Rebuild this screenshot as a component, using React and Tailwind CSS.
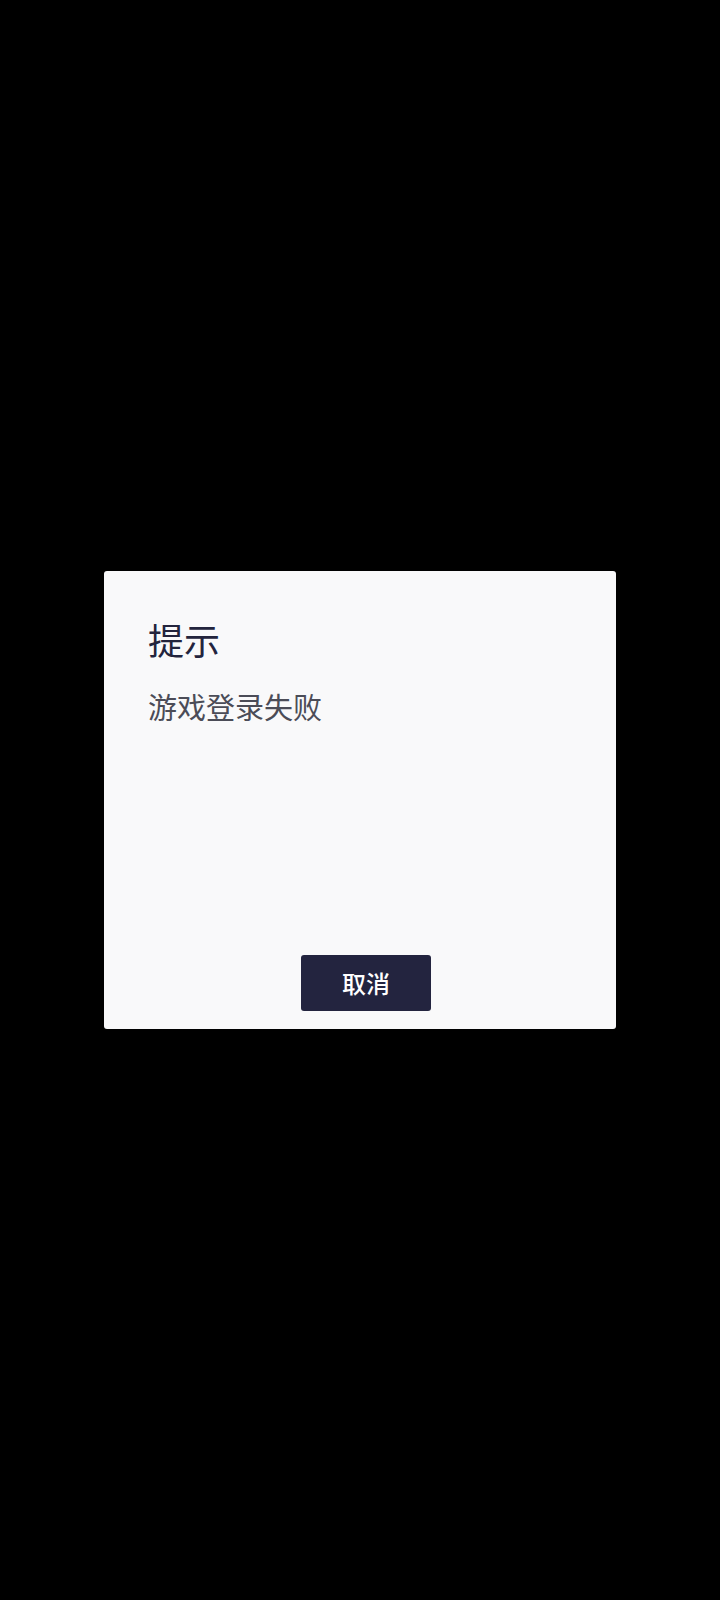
import React from 'react';

const font = { fontFamily: '"Noto Sans CJK SC", "Noto Sans", sans-serif' };

export default function App() {
  return (
    <div className="w-[720px] h-[1600px] bg-black flex items-center justify-center" style={font}>
      <div className="w-[512px] h-[458px] bg-[#f9f9fa] rounded-[3px] flex flex-col pl-[44px] pr-[44px]">
        <h1 className="mt-[46px] text-[36px] leading-[44px] text-[#23243d] font-normal">提示</h1>
        <p className="mt-[25px] text-[29px] leading-[40px] text-[#4b4c57]">游戏登录失败</p>
        <div className="mt-auto mb-[18px] flex justify-center pl-[12px]">
          <button className="w-[130px] h-[56px] rounded-[3px] bg-[#23243f] text-white text-[24px] leading-none font-medium">
            取消
          </button>
        </div>
      </div>
    </div>
  );
}
